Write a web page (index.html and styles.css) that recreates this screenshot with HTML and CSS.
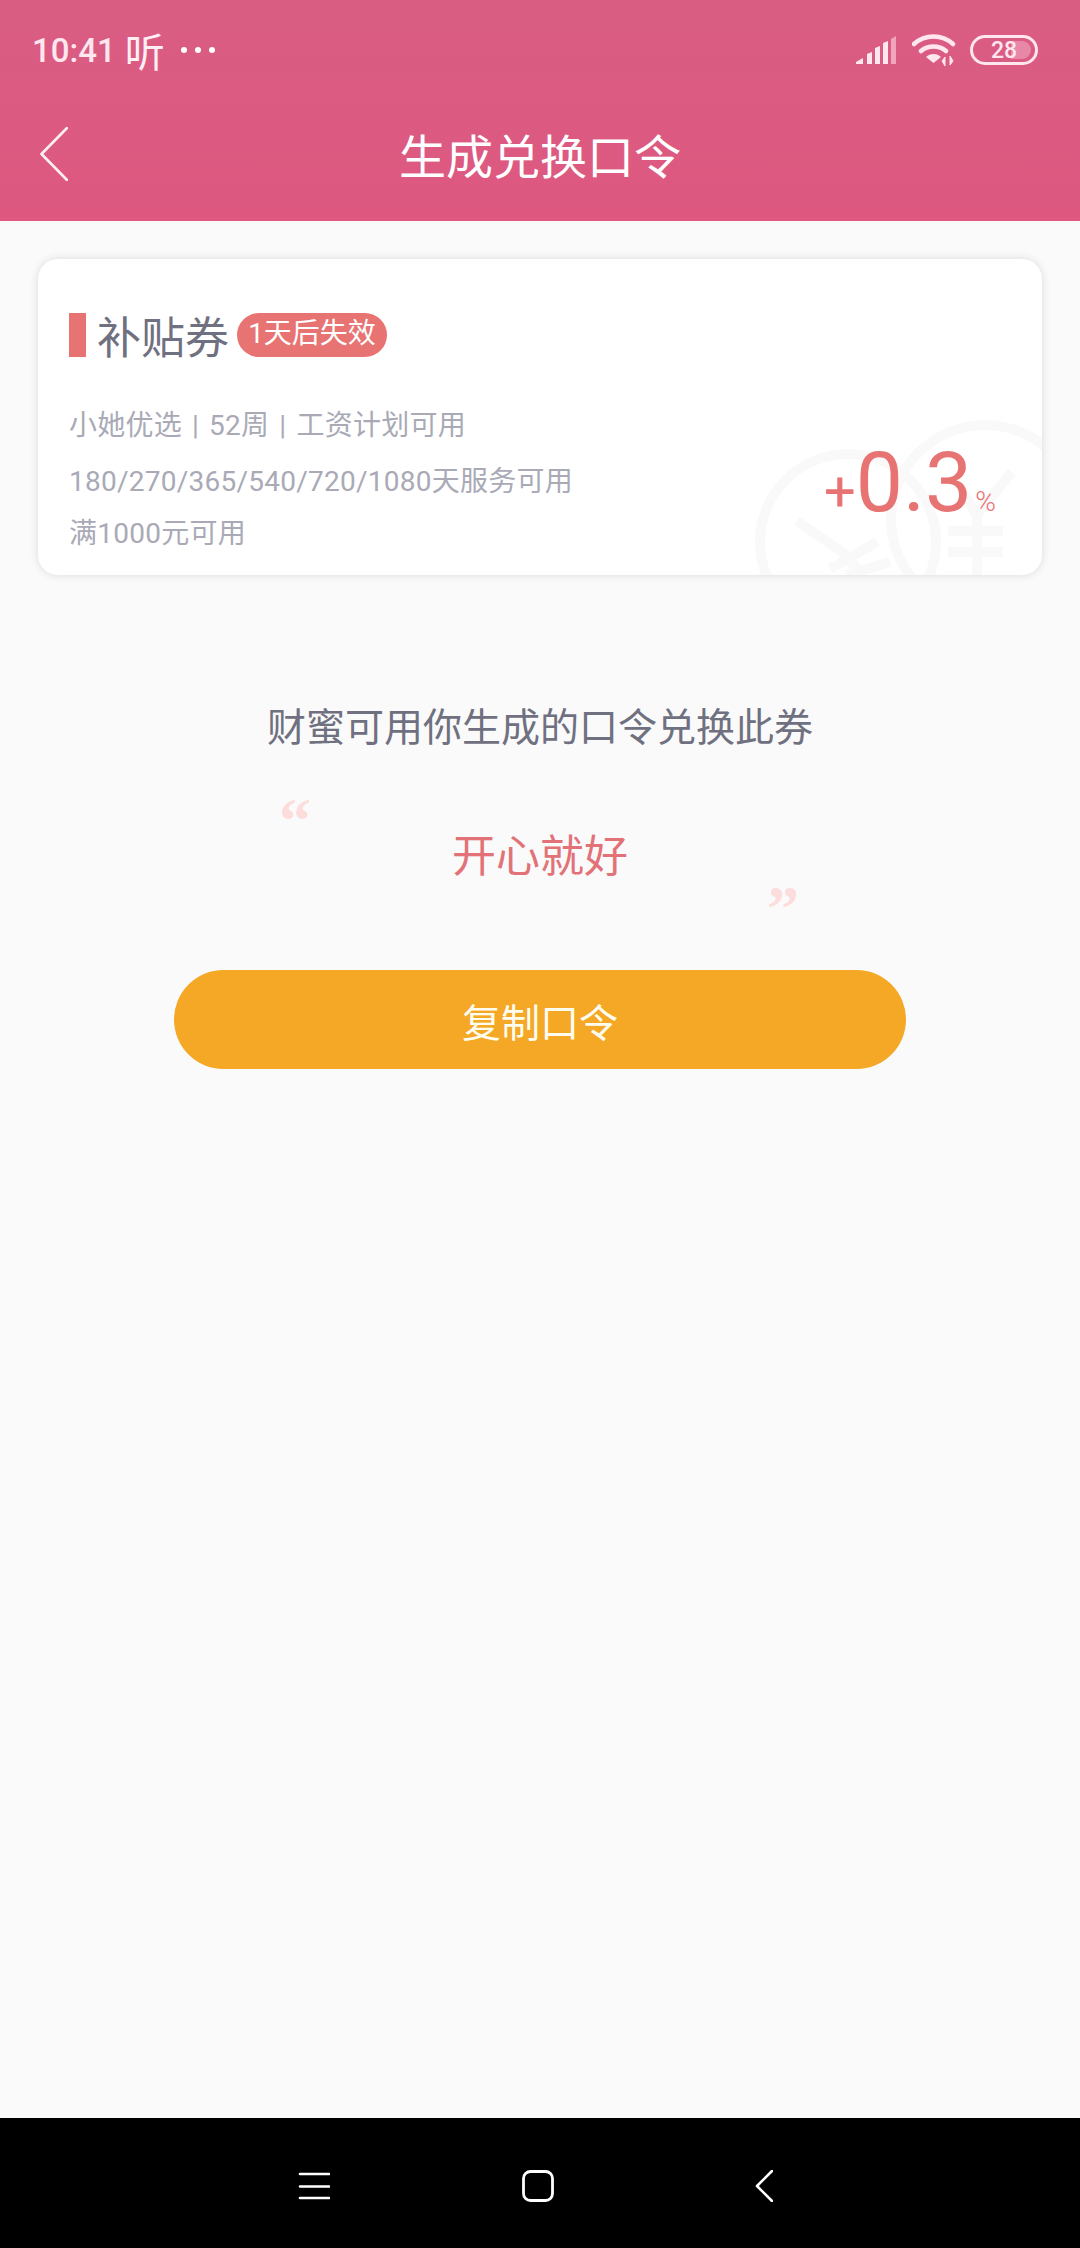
FILE: index.html
```html
<!DOCTYPE html>
<html lang="zh-CN">
<head>
    <meta charset="UTF-8">
    <title>生成兑换口令</title>
    <link rel="stylesheet" href="styles.css">
</head>
<body>
<header class="top">
    <div class="status">
        <div class="status-left">
            <span class="time">10:41</span>
            <span class="listen">听</span>
            <span class="dots"><i></i><i></i><i></i></span>
        </div>
        <div class="status-right">
            <svg class="signal" width="40" height="28" viewBox="0 0 40 28">
                <path d="M0 28 V26 L7 22 V28 Z M11 28 V18 L16 16 V28 Z M19 28 V12 L24 10 V28 Z M27 28 V7 L32 5 V28 Z" fill="#ffe6ef"/>
                <path d="M35 28 V3 L40 0 V28 Z" fill="#f0a5bd"/>
            </svg>
            <svg class="wifi" width="46" height="32" viewBox="0 0 46 32">
                <path d="M2 10 C13 0 30 0 41 10 M9 17 C16 11 27 11 34 17" fill="none" stroke="#ffe6ef" stroke-width="4.5" stroke-linecap="round"/>
                <path d="M14 23 C18 19 25 19 29 23 L21.500 29 Z" fill="#ffe6ef"/>
                <path d="M33 32 V23 L30 27 Z M38 22 V31 L41 27 Z" fill="#ffe6ef" stroke="#ffe6ef"/>
            </svg>
            <div class="battery"><b class="battery-fill"></b><span>28</span></div>
        </div>
    </div>
    <div class="appbar">
        <svg class="back" width="28" height="54" viewBox="0 0 28 54">
            <path d="M27 1 L1.500 27 L27 53" fill="none" stroke="#fff" stroke-width="2.600" stroke-linecap="round" stroke-linejoin="round" opacity="0.9"/>
        </svg>
        <h1>生成兑换口令</h1>
    </div>
</header>

<main class="content">
    <section class="card">
        <svg class="coins" width="340" height="170" viewBox="0 0 340 170">
            <g fill="none" stroke="#f9f9f9" stroke-width="10">
                <circle cx="146" cy="137" r="88"/>
                <circle cx="283" cy="114" r="94"/>
                <path d="M95 116 L143 149 L160 170 M128 164 L175 137 M145 170 L188 157"/>
                <path d="M310 67 L275 110 L250 70 M275 110 V170 M246 126 H301 M246 147 H301"/>
            </g>
        </svg>
        <div class="card-title">
            <span class="mark"></span>
            <span class="name">补贴券</span>
            <span class="tag">1天后失效</span>
        </div>
        <div class="rules">
            <p class="rule-first">小她优选<span class="sep">|</span>52周<span class="sep">|</span>工资计划可用</p>
            <p>180/270/365/540/720/1080天服务可用</p>
            <p>满1000元可用</p>
        </div>
        <div class="rate"><span class="plus">+</span><span class="num">0.3</span><span class="pct">%</span></div>
    </section>

    <p class="hint">财蜜可用你生成的口令兑换此券</p>
    <div class="code">
        <span class="quote quote-left">“</span>
        <span class="code-text">开心就好</span>
        <span class="quote quote-right">”</span>
    </div>
    <button type="button" class="copy">复制口令</button>
</main>

<nav class="navbar">
    <svg class="nav-menu" width="32" height="28" viewBox="0 0 32 28">
        <path d="M2 2 H31 M2 14.500 H31 M2 26 H31" stroke="#fff" stroke-width="2.600" stroke-linecap="round"/>
    </svg>
    <svg class="nav-home" width="32" height="32" viewBox="0 0 32 32">
        <rect x="1.500" y="1.500" width="29" height="29" rx="7" fill="none" stroke="#fff" stroke-width="2.800"/>
    </svg>
    <svg class="nav-back" width="18" height="32" viewBox="0 0 18 32">
        <path d="M17 1 L2 16 L17 31" fill="none" stroke="#fff" stroke-width="2.600" stroke-linecap="round" stroke-linejoin="round"/>
    </svg>
</nav>
</body>
</html>
```

FILE: styles.css
```css
* {
    box-sizing: border-box;
    margin: 0;
    padding: 0;
}
body {
    width: 1080px;
    height: 2248px;
    overflow: hidden;
    display: flex;
    flex-direction: column;
    background-color: #fafafa;
    font-family: Roboto, "Noto Sans CJK SC", sans-serif;
}

/* header */
.top {
    height: 221px;
    background: linear-gradient(#d95d83, #de5880);
    color: #fff;
}
.status {
    height: 100px;
    display: flex;
    justify-content: space-between;
    align-items: center;
    padding: 0 42px 0 32px;
}
.status-left, .status-right {
    display: flex;
    align-items: center;
}
.time {
    font-size: 33px;
    font-weight: 500;
    color: #ffe6ef;
}
.listen {
    font-size: 40px;
    margin-left: 9px;
    color: #ffeef4;
}
.dots {
    display: flex;
    gap: 8px;
    margin-left: 16px;
}
.dots i {
    width: 6px;
    height: 6px;
    border-radius: 50%;
    background-color: #fff;
}
.wifi {
    margin-left: 16px;
}
.battery {
    position: relative;
    width: 68px;
    height: 30px;
    margin-left: 12px;
    border: 3px solid #ffe6ef;
    border-radius: 15px;
    display: flex;
    align-items: center;
    justify-content: center;
    font-size: 23px;
    font-weight: 500;
    color: #ffe6ef;
}
.battery span {
    position: relative;
}
.battery-fill {
    position: absolute;
    right: 4px;
    top: 3px;
    width: 20px;
    height: 18px;
    border-radius: 0 9px 9px 0;
    background-color: #e888a8;
}
.appbar {
    position: relative;
    height: 110px;
    padding-bottom: 4px;
    display: flex;
    align-items: center;
    justify-content: center;
}
.back {
    position: absolute;
    left: 40px;
    top: 27px;
}
.appbar h1 {
    font-size: 47px;
    font-weight: 400;
}

/* main */
.content {
    flex: 1;
    padding: 38px 38px 0;
    display: flex;
    flex-direction: column;
    align-items: center;
}
.card {
    position: relative;
    overflow: hidden;
    width: 100%;
    height: 316px;
    padding: 54px 31px 0;
    background-color: #fff;
    border-radius: 20px;
    box-shadow: 0 0 8px rgba(0, 0, 0, 0.13);
}
.coins {
    position: absolute;
    right: 0;
    bottom: 0;
}
.card-title {
    position: relative;
    display: flex;
    align-items: center;
    height: 44px;
}
.mark {
    width: 17px;
    height: 44px;
    background-color: #e87373;
}
.name {
    margin-left: 11px;
    font-size: 44px;
    color: #6f7080;
}
.tag {
    margin-left: 8px;
    width: 150px;
    height: 44px;
    line-height: 42px;
    text-align: center;
    font-size: 28px;
    color: #fff;
    background-color: #e87373;
    border-radius: 22px;
}
.rules {
    position: relative;
    margin-top: 43px;
    font-size: 28px;
    line-height: 52px;
    letter-spacing: 0.25px;
    color: #a9aab6;
}
.rule-first {
    margin-bottom: 4px;
}
.sep {
    margin: 0 10px;
}
.rate {
    position: absolute;
    right: 46px;
    top: 174px;
    display: flex;
    align-items: baseline;
    color: #e87373;
}
.plus {
    font-size: 56px;
}
.num {
    font-size: 84px;
}
.pct {
    font-size: 28px;
    font-weight: 300;
    margin-left: 3px;
}

.hint {
    margin-top: 124px;
    font-size: 39px;
    line-height: 58px;
    color: #6f7080;
}
.code {
    position: relative;
    width: 532px;
    height: 130px;
    margin-top: 36px;
    display: flex;
    justify-content: center;
    padding-top: 35px;
}
.code-text {
    font-size: 44px;
    line-height: 58px;
    color: #e27278;
}
.quote {
    position: absolute;
    font-family: "Liberation Serif", serif;
    font-weight: 700;
    font-size: 64px;
    line-height: 58px;
    color: #fddcdc;
}
.quote-left {
    left: 5px;
    top: -1px;
}
.quote-right {
    right: 7px;
    top: 87px;
}
.copy {
    width: 732px;
    height: 99px;
    margin-top: 47px;
    border: none;
    border-radius: 50px;
    background-color: #f4a825;
    color: #fffdf0;
    font-family: inherit;
    font-size: 39px;
}

/* bottom bar */
.navbar {
    height: 130px;
    background-color: #000;
    display: flex;
    align-items: center;
    padding: 5px 0 0 298px;
}
.nav-home {
    margin-left: 192px;
}
.nav-back {
    margin-left: 201px;
}
```
